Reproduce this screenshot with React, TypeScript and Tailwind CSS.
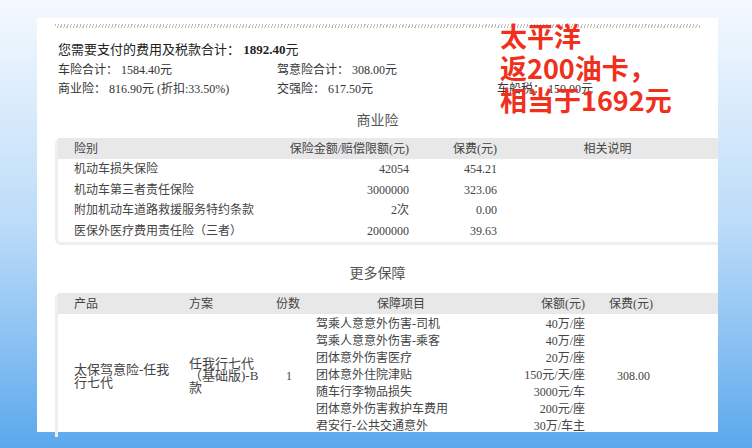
const serif = { fontFamily: '"Liberation Serif", "Noto Sans CJK SC", serif' }

const commercial = [
  ['机动车损失保险', '42054', '454.21'],
  ['机动车第三者责任保险', '3000000', '323.06'],
  ['附加机动车道路救援服务特约条款', '2次', '0.00'],
  ['医保外医疗费用责任险（三者）', '2000000', '39.63'],
]

const items = [
  ['驾乘人意意外伤害-司机', '40万/座'],
  ['驾乘人意意外伤害-乘客', '40万/座'],
  ['团体意外伤害医疗', '20万/座'],
  ['团体意外住院津贴', '150元/天/座'],
  ['随车行李物品损失', '3000元/车'],
  ['团体意外伤害救护车费用', '200元/座'],
  ['君安行-公共交通意外', '30万/车主'],
]

export default function App() {
  return (
    <div
      className="relative w-[752px] h-[448px] overflow-hidden bg-gradient-to-b from-[#f4f9fe] via-[#bcdcf8] to-[#5aa8ec] text-[13px] text-[#333]"
      style={serif}
    >
      <div className="absolute left-[37px] top-[18px] w-[681px] h-[414px] bg-white">
        {/* hatched rule */}
        <div className="mx-[18px] mt-[6px] h-[4px] bg-[repeating-linear-gradient(110deg,#bbb_0,#bbb_1px,transparent_1px,transparent_3px)]" />
        <div className="pl-[21px] pt-[12px]">
          <div className="text-[13px] leading-[20px] text-[#222]">
            您需要支付的费用及税款合计： <b>1892.40</b>元
          </div>
          <div className="grid grid-cols-[219px_220px_1fr] leading-[19px] text-[12px] mt-[1px]">
            <span>车险合计： 1584.40元</span>
            <span>驾意险合计： 308.00元</span>
            <span />
            <span>商业险： 816.90元 (折扣:33.50%)</span>
            <span>交强险： 617.50元</span>
            <span>车船税： 150.00元</span>
          </div>
        </div>
        <div className="text-center text-[14px] text-[#555] mt-[12px] leading-[20px]">商业险</div>
        <div className="ml-[18px] mt-[7px] rounded-l-[6px] border-l-[3px] border-b-[3px] border-[#eee] pb-[1px] text-[12px] text-[#444]">
          <div className="grid grid-cols-[215px_136px_88px_1fr] bg-[#e8e8e8] h-[21px] items-center">
            <span className="pl-[16px]">险别</span>
            <span className="text-right">保险金额/赔偿限额(元)</span>
            <span className="text-right">保费(元)</span>
            <span className="text-center">相关说明</span>
          </div>
          {commercial.map(r => (
            <div key={r[0]} className="grid grid-cols-[215px_136px_88px_1fr] h-[20.5px] items-center">
              <span className="pl-[16px] whitespace-nowrap">{r[0]}</span>
              <span className="text-right">{r[1]}</span>
              <span className="text-right">{r[2]}</span>
              <span />
            </div>
          ))}
        </div>
        <div className="text-center text-[14px] text-[#555] mt-[19px] leading-[20px]">更多保障</div>
        <div className="ml-[18px] mt-[9px] rounded-tl-[6px] border-l-[3px] border-[#eee] text-[12px] text-[#444]">
          <div className="grid grid-cols-[131px_87px_40px_170px_99px_1fr] bg-[#e8e8e8] h-[21px] items-center">
            <span className="pl-[16px]">产品</span>
            <span>方案</span>
            <span>份数</span>
            <span className="text-center">保障项目</span>
            <span className="text-right">保额(元)</span>
            <span className="pl-[24px]">保费(元)</span>
          </div>
          <div className="grid grid-cols-[131px_87px_40px_170px_99px_1fr] items-center">
            <span className="pl-[16px] pr-[12px] leading-[13px] text-[13px]">太保驾意险-任我行七代</span>
            <span className="leading-[12px] text-[13px] w-[76px]">任我行七代（基础版)-B款</span>
            <span className="pl-[10px]">1</span>
            <div className="py-[2px]">
              {items.map(i => (
                <div key={i[0]} className="leading-[17px] whitespace-nowrap">{i[0]}</div>
              ))}
            </div>
            <div className="py-[2px] text-right">
              {items.map(i => (
                <div key={i[0]} className="leading-[17px]">{i[1]}</div>
              ))}
            </div>
            <span className="pl-[32px]">308.00</span>
          </div>
        </div>
      </div>
      <div
        className="absolute left-[500px] top-[20px] text-[27px] leading-[32px] text-[#f0301c] font-bold"
        style={{ fontFamily: '"Noto Sans CJK SC", sans-serif' }}
      >
        <div>太平洋</div>
        <div>返200油卡，</div>
        <div>相当于1692元</div>
      </div>
    </div>
  )
}
